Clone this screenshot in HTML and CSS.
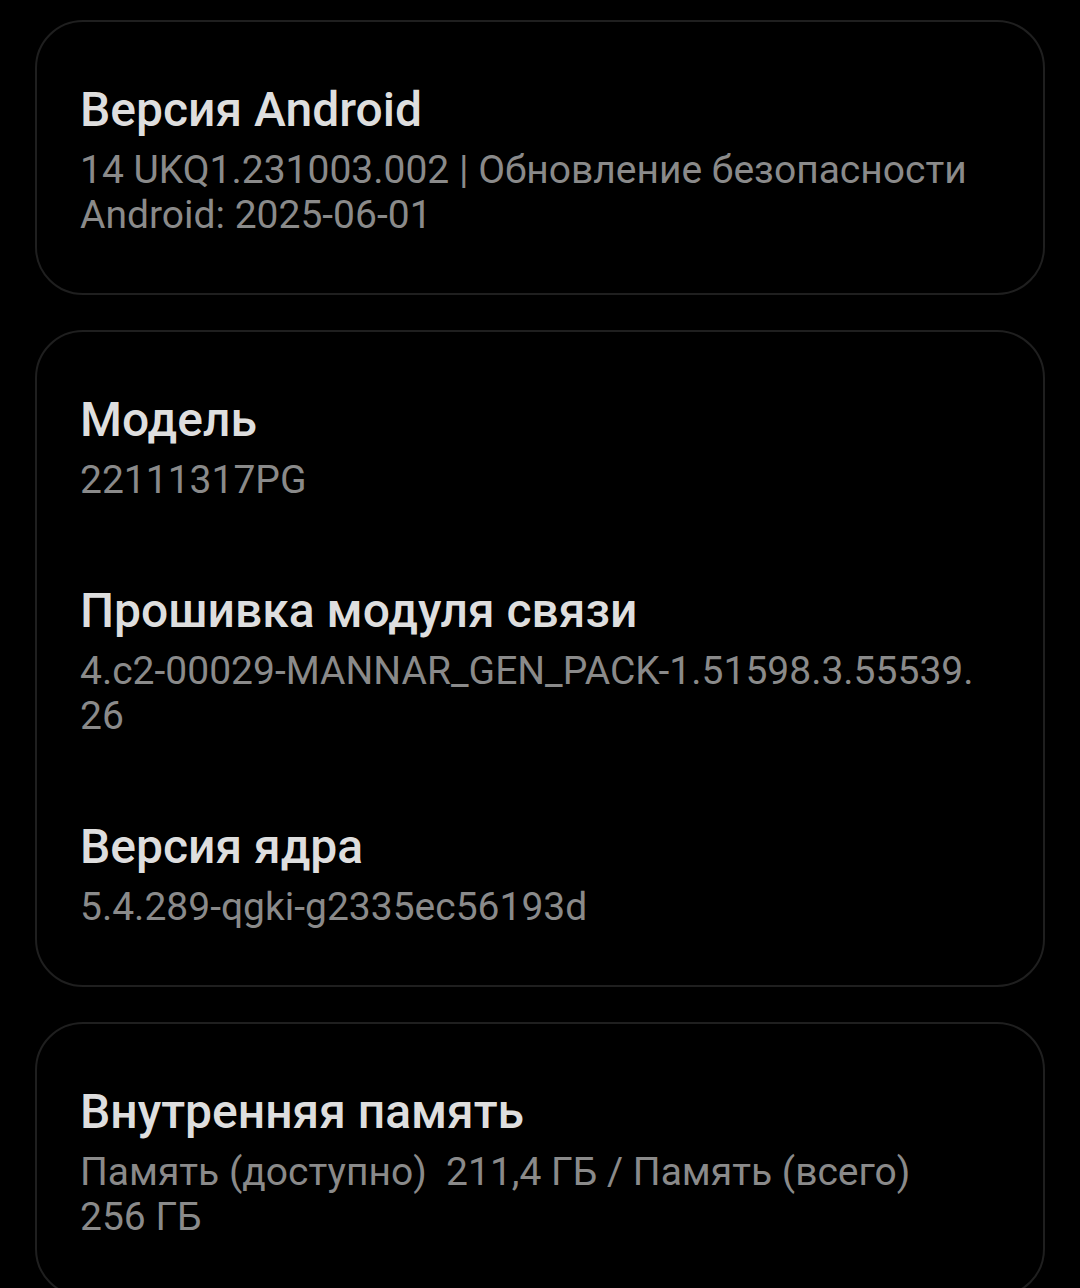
FILE: index.html
```html
<!DOCTYPE html>
<html lang="ru">
<head>
  <meta charset="utf-8">
  <title>О телефоне</title>
  <link rel="stylesheet" href="styles.css">
</head>
<body>

  <div class="card-list">
    <section class="card">
      <div class="info-item">
        <div class="info-title">Версия Android</div>
        <div class="info-value">14 UKQ1.231003.002 | Обновление безопасности<br>Android: 2025-06-01</div>
      </div>
    </section>

    <section class="card">
      <div class="info-item">
        <div class="info-title">Модель</div>
        <div class="info-value">22111317PG</div>
      </div>
      <div class="info-item">
        <div class="info-title">Прошивка модуля связи</div>
        <div class="info-value">4.c2-00029-MANNAR_GEN_PACK-1.51598.3.55539.<br>26</div>
      </div>
      <div class="info-item">
        <div class="info-title">Версия ядра</div>
        <div class="info-value">5.4.289-qgki-g2335ec56193d</div>
      </div>
    </section>

    <section class="card">
      <div class="info-item">
        <div class="info-title">Внутренняя память</div>
        <div class="info-value">Память (доступно)&nbsp; 211,4 ГБ / Память (всего)<br>256 ГБ</div>
      </div>
    </section>
  </div>

</body>
</html>
```

FILE: styles.css
```css
body {
  margin: 0;
  background-color: #000;
  color: #e0e0e0;
  font-family: Roboto, "Noto Sans", sans-serif;
}

.card-list {
  display: flex;
  flex-direction: column;
  gap: 35px;
  padding: 20px 35px 0;
}

.card {
  border: 2px solid #1f1f1f;
  border-radius: 48px;
  padding: 20px 0 15px;
}

.info-item {
  padding: 40px 43px;
}

.info-title {
  font-size: 48px;
  font-weight: 500;
  line-height: 56px;
  color: #dedede;
  margin-bottom: 10px;
}

.info-value {
  font-size: 39px;
  line-height: 45px;
  color: #8a8a8a;
}
```
